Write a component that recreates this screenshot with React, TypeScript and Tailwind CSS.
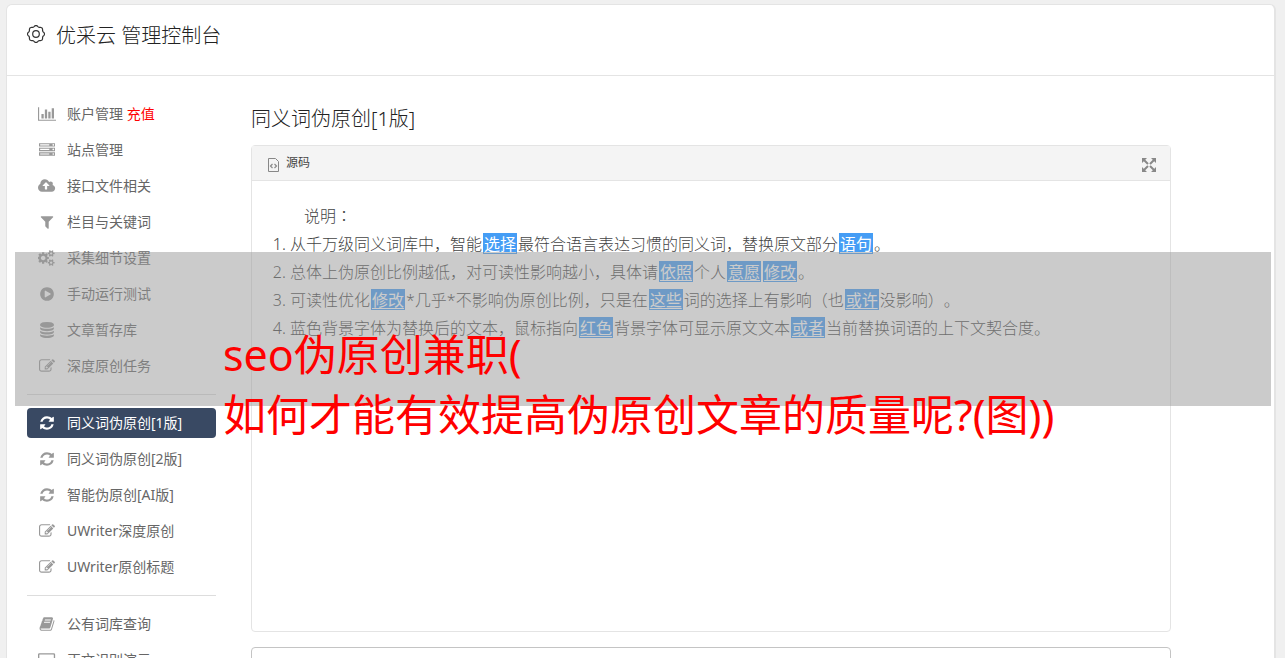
import React from "react";

type IconDef = { w: number; d: string };

const gearSmall = (y: number) =>
  `M1856 ${y}v140q0 16-149 31-12 27-30 52 51 113 51 138 0 4-4 7-122 71-124 71-8 0-46-47t-52-68q-20 2-30 2t-30-2q-14 21-52 68t-46 47q-2 0-124-71-4-3-4-7 0-25 51-138-18-25-30-52-149-15-149-31v-140q0-16 149-31 13-29 30-52-51-113-51-138 0-4 4-7 4-2 35-20t59-34 30-16q8 0 46 46.500t52 67.500q20-2 30-2t30 2q51-71 92-112l6-2q4 0 124 70 4 3 4 7 0 25-51 138 17 23 30 52 149 15 149 31z`;

const icons = {
  chart: { w: 2048, d: "M640 896v512h-256v-512h256zm384-512v1024h-256v-1024h256zm1024 1152v128h-2048v-1536h128v1408h1920zm-640-896v768h-256v-768h256zm384-384v1152h-256v-1152h256z" },
  server: { w: 1792, d: "M128 1408h1024v-128h-1024v128zm0-512h1024v-128h-1024v128zm1568 448q0-40-28-68t-68-28-68 28-28 68 28 68 68 28 68-28 28-68zm-1568-960h1024v-128h-1024v128zm1568 448q0-40-28-68t-68-28-68 28-28 68 28 68 68 28 68-28 28-68zm0-512q0-40-28-68t-68-28-68 28-28 68 28 68 68 28 68-28 28-68zm96 832v384h-1792v-384h1792zm0-512v384h-1792v-384h1792zm0-512v384h-1792v-384h1792z" },
  cloud: { w: 1920, d: "M1280 864q0-14-9-23l-352-352q-9-9-23-9t-23 9l-351 351q-10 12-10 24 0 14 9 23t23 9h224v352q0 13 9.500 22.500t22.500 9.500h192q13 0 22.500-9.500t9.500-22.500v-352h224q13 0 22.500-9.500t9.500-22.500zm640 288q0 159-112.500 271.500t-271.500 112.500h-1088q-185 0-316.500-131.500t-131.500-316.500q0-130 70-240t188-165q-2-30-2-43 0-212 150-362t362-150q156 0 285.500 87t188.500 231q71-62 166-62 106 0 181 75t75 181q0 76-41 138 130 31 213.500 135.500t83.500 238.500z" },
  filter: { w: 1792, d: "M1595 295q17 41-14 70l-493 493v742q0 42-39 59-13 5-25 5-27 0-45-19l-256-256q-19-19-19-45v-486l-493-493q-31-29-14-70 17-39 59-39h1280q42 0 59 39z" },
  cogs: {
    w: 1920,
    d:
      "M832 896q0-106-75-181t-181-75-181 75-75 181 75 181 181 75 181-75 75-181zm768 512q0-52-38-90t-90-38-90 38-38 90q0 53 37.500 90.500t90.500 37.500 90.500-37.500 37.500-90.500zm0-1024q0-52-38-90t-90-38-90 38-38 90q0 53 37.500 90.500t90.500 37.500 90.500-37.500 37.500-90.500zm-384 421v185q0 10-7 19.500t-16 10.500l-155 24q-11 35-32 76 34 48 90 115 7 11 7 20 0 12-7 19-23 30-82.500 89.500t-78.500 59.500q-11 0-21-7l-115-90q-37 19-77 31-11 108-23 155-7 24-30 24h-186q-11 0-20-7.500t-10-17.500l-23-153q-34-10-75-31l-118 89q-7 7-20 7-11 0-21-8-144-133-144-160 0-9 7-19 10-14 41-53t47-61q-23-44-35-82l-152-24q-10-1-17-9.500t-7-19.500v-185q0-10 7-19.500t16-10.500l155-24q11-35 32-76-34-48-90-115-7-11-7-20 0-12 7-20 22-30 82-89t79-59q11 0 21 7l115 90q34-18 77-32 11-108 23-154 7-24 30-24h186q11 0 20 7.500t10 17.500l23 153q34 10 75 31l118-89q8-7 20-7 11 0 21 8 144 133 144 160 0 8-7 19-12 16-42 54t-45 60q23 48 34 82l152 23q10 2 17 10.500t7 19.500z" +
      gearSmall(1338) +
      gearSmall(314),
  },
  play: { w: 1792, d: "M896 128q209 0 385.500 103t279.500 279.500 103 385.500-103 385.500-279.500 279.500-385.500 103-385.500-103-279.500-279.500-103-385.500 103-385.500 279.500-279.500 385.500-103zm384 823q32-18 32-55t-32-55l-544-320q-31-19-64-1-32 19-32 56v640q0 37 32 56 16 8 32 8 17 0 32-9z" },
  database: { w: 1792, d: "M896 768q237 0 443-43t325-127v170q0 69-103 128t-280 93.500-385 34.500-385-34.500-280-93.500-103-128v-170q119 84 325 127t443 43zm0 768q237 0 443-43t325-127v170q0 69-103 128t-280 93.500-385 34.500-385-34.500-280-93.500-103-128v-170q119 84 325 127t443 43zm0-384q237 0 443-43t325-127v170q0 69-103 128t-280 93.500-385 34.500-385-34.500-280-93.500-103-128v-170q119 84 325 127t443 43zm0-1152q208 0 385 34.500t280 93.500 103 128v128q0 69-103 128t-280 93.500-385 34.500-385-34.500-280-93.500-103-128v-128q0-69 103-128t280-93.500 385-34.500z" },
  refresh: { w: 1792, d: "M1639 1056q0 5-1 7-64 268-268 434.500t-478 166.500q-146 0-282.500-55t-243.500-157l-129 129q-19 19-45 19t-45-19-19-45v-448q0-26 19-45t45-19h448q26 0 45 19t19 45-19 45l-137 137q71 66 161 102t187 36q134 0 250-65t186-179q11-17 53-117 8-23 30-23h192q13 0 22.500 9.500t9.500 22.500zm25-800v448q0 26-19 45t-45 19h-448q-26 0-45-19t-19-45 19-45l138-138q-148-137-349-137-134 0-250 65t-186 179q-11 17-53 117-8 23-30 23h-199q-13 0-22.500-9.500t-9.500-22.500v-7q65-268 270-434.500t480-166.500q146 0 284 55.500t245 156.500l130-129q19-19 45-19t45 19 19 45z" },
  edit: { w: 1792, d: "M888 1184l116-116-152-152-116 116v56h96v96h56zm440-720q-16-16-33 1l-350 350q-17 17-1 33t33-1l350-350q17-17 1-33zm80 594v190q0 119-84.500 203.500t-203.500 84.500h-832q-119 0-203.500-84.500t-84.500-203.500v-832q0-119 84.500-203.500t203.500-84.500h832q63 0 117 25 15 7 18 23 3 17-9 29l-49 49q-14 14-32 8-23-6-45-6h-832q-66 0-113 47t-47 113v832q0 66 47 113t113 47h832q66 0 113-47t47-113v-126q0-13 9-22l64-64q15-15 35-7t20 29zm-96-738l288 288-672 672h-288v-288zm444 132l-92 92-288-288 92-92q28-28 68-28t68 28l152 152q28 28 28 68t-28 68z" },
  book: { w: 1792, d: "M1703 478q40 57 18 129l-275 906q-19 64-76.500 107.500t-122.500 43.500h-923q-77 0-148.500-53.500t-99.500-131.500q-24-67-2-127 0-4 3-27t4-37q1-8-3-21.500t-3-19.500q2-11 8-21t16.500-23.500 16.500-23.500q23-38 45-91.500t30-91.500q3-10 .5-30t-.5-28q3-11 17-28t17-23q21-36 42-92t25-90q1-9-2.500-32t.5-28q4-13 22-30.500t22-22.500q19-26 42.500-84.500t27.500-96.500q1-8-3-25.500t-2-26.500q2-8 9-18t18-23 17-21q8-12 16.500-30.500t15-35 16-36 19.500-32 26.500-23.500 36-11.500 47.500 5.500l-1 3q38-9 51-9h761q74 0 114 56t18 130l-274 906q-36 119-71.500 153.500t-128.500 34.500h-869q-27 0-38 15-11 16-1 43 24 70 144 70h923q29 0 56-15.500t35-41.500l300-987q7-22 5-57 38 15 59 43zm-1064 2q-4 13 2 22.500t20 9.500h608q13 0 25.500-9.500t16.500-22.500l21-64q4-13-2-22.500t-20-9.500h-608q-13 0-25.500 9.500t-16.500 22.500zm-83 256q-4 13 2 22.500t20 9.500h608q13 0 25.500-9.500t16.500-22.500l21-64q4-13-2-22.500t-20-9.500h-608q-13 0-25.500 9.500t-16.500 22.500z" },
  screen: { w: 1920, d: "M160 128h1600q160 0 160 160v1100q0 160-160 160h-1600q-160 0-160-160v-1100q0-160 160-160zm30 150q-40 0-40 40v900q0 40 40 40h1540q40 0 40-40v-900q0-40-40-40z" },
} satisfies Record<string, IconDef>;

type IconName = keyof typeof icons;

function Icon({ name }: { name: IconName }) {
  const { w, d } = icons[name];
  return (
    <svg viewBox={`0 0 ${w} 1792`} className="h-4 w-auto" fill="currentColor" fillRule="evenodd" aria-hidden="true">
      <path d={d} />
    </svg>
  );
}

type Item = { icon: IconName; label: string; extra?: string; active?: boolean };

const groups: Item[][] = [
  [
    { icon: "chart", label: "账户管理", extra: "充值" },
    { icon: "server", label: "站点管理" },
    { icon: "cloud", label: "接口文件相关" },
    { icon: "filter", label: "栏目与关键词" },
    { icon: "cogs", label: "采集细节设置" },
    { icon: "play", label: "手动运行测试" },
    { icon: "database", label: "文章暂存库" },
    { icon: "edit", label: "深度原创任务" },
  ],
  [
    { icon: "refresh", label: "同义词伪原创[1版]", active: true },
    { icon: "refresh", label: "同义词伪原创[2版]" },
    { icon: "refresh", label: "智能伪原创[AI版]" },
    { icon: "edit", label: "UWriter深度原创" },
    { icon: "edit", label: "UWriter原创标题" },
  ],
  [
    { icon: "book", label: "公有词库查询" },
    { icon: "screen", label: "正文识别演示" },
  ],
];

function NavLink({ icon, label, extra, active }: Item) {
  return (
    <a
      href="#"
      aria-current={active ? "page" : undefined}
      className={
        active
          ? "flex h-[30px] items-center rounded bg-[#394963] pl-2.5 text-white"
          : "flex h-[30px] items-center rounded pl-2.5 text-[#666]"
      }
    >
      <span className={active ? "mr-2.5 flex w-5 justify-center" : "mr-2.5 flex w-5 justify-center text-[#999]"}>
        <Icon name={icon} />
      </span>
      <span>
        {label}
        {extra && <span className="text-[#f00]"> {extra}</span>}
      </span>
    </a>
  );
}

function Mark({ children }: { children: React.ReactNode }) {
  return (
    <a href="#" className="mx-px mt-[3px] inline-block h-[21px] bg-[#459df5] px-px align-top leading-[22px] font-normal text-white underline underline-offset-2">
      {children}
    </a>
  );
}

const scallop =
  Array.from({ length: 97 }, (_, i) => {
    const a = (i / 96) * Math.PI * 2;
    const r = 7.9 + 0.6 * Math.cos(8 * a);
    return `${i ? "L" : "M"}${(9 + r * Math.sin(a)).toFixed(2)} ${(9 - r * Math.cos(a)).toFixed(2)}`;
  }).join("") + "Z";

export default function App() {
  return (
    <div
      lang="zh-CN"
      className="relative flex h-screen flex-col overflow-hidden bg-[#f0f0f0] pt-1 pr-[9px] pl-1.5 font-['Noto_Sans','Noto_Sans_CJK_SC',sans-serif] font-light text-[#222] [text-spacing-trim:space-all]"
    >
      <div className="shrink-0 grow rounded-t-md border-t border-r-2 border-l border-[#e4e4e4] bg-white">
        <header className="flex h-[71px] items-start gap-[11px] border-b border-[#e4e4e4] pt-4 pl-5">
          <svg viewBox="0 0 18 18" className="mt-1 size-[18px]" fill="none" stroke="#333" strokeWidth="1.2" aria-hidden="true">
            <path d={scallop} />
            <circle cx="9" cy="9" r="3.3" />
          </svg>
          <h1 className="text-xl leading-[30px]">优采云 管理控制台</h1>
        </header>

        <div className="flex gap-[35px] pt-[23px] pl-5">
          <nav className="w-[189px] shrink-0 text-sm font-normal">
            {groups.map((group, i) => (
              <React.Fragment key={i}>
                {i > 0 && <hr className="my-[13px] border-[#ddd]" />}
                <ul className="flex flex-col gap-1.5">
                  {group.map((item) => (
                    <li key={item.label}>
                      <NavLink {...item} />
                    </li>
                  ))}
                </ul>
              </React.Fragment>
            ))}
          </nav>

          <main className="max-w-[920px] grow">
            <h2 className="pt-[5px] text-xl leading-[30px]">同义词伪原创[1版]</h2>
            <section className="mt-[11px] min-h-[487px] rounded border border-[#e4e4e4]">
              <div className="flex h-[35px] items-center justify-between border-b border-[#e4e4e4] bg-[#f4f4f4] pr-3.5 pl-4">
                <button type="button" className="flex items-center gap-[7px] text-xs font-normal text-[#444]">
                  <svg viewBox="0 0 11 14" className="mt-1 h-3.5 w-[11px]" fill="none" stroke="#888" aria-hidden="true">
                    <path d="M.5.5h7l3 3v10h-10z" />
                    <path d="M4.500 6L2.500 8l2 2M6.500 6l2 2-2 2" strokeWidth="1.200" />
                  </svg>
                  源码
                </button>
                <button type="button" aria-label="全屏">
                  <svg viewBox="0 0 14 14" className="mt-1 size-3.5" fill="#888" stroke="#888" strokeWidth="2" aria-hidden="true">
                    <path d="M2 2l4 4M12 2L8 6M2 12l4-4M12 12L8 8" />
                    <path stroke="none" d="M0 0h5L0 5zM14 0H9l5 5zM0 14h5L0 9zM14 14H9l5-5z" />
                  </svg>
                </button>
              </div>
              <div className="px-5 pt-5 text-base leading-7 text-[#444]">
                <p className="pl-8">
                  说明<span className="font-['Noto_Sans_CJK_TC',sans-serif]" lang="zh-TW">：</span>
                </p>
                <ol className="list-decimal pl-[18px]">
                  <li>
                    从千万级同义词库中，智能<Mark>选择</Mark>最符合语言表达习惯的同义词，替换原文部分<Mark>语句</Mark>。
                  </li>
                  <li>
                    总体上伪原创比例越低，对可读性影响越小，具体请<Mark>依照</Mark>个人<Mark>意愿</Mark>
                    <Mark>修改</Mark>。
                  </li>
                  <li>
                    可读性优化<Mark>修改</Mark>*几乎*不影响伪原创比例，只是在<Mark>这些</Mark>词的选择上有影响（也<Mark>或许</Mark>没影响）。
                  </li>
                  <li>
                    蓝色背景字体为替换后的文本，鼠标指向<Mark>红色</Mark>背景字体可显示原文文本<Mark>或者</Mark>当前替换词语的上下文契合度。
                  </li>
                </ol>
              </div>
            </section>
            <section className="mt-[15px] h-20 rounded border border-[#c4c4c4]" />
          </main>
        </div>
      </div>

      <div className="absolute top-[252px] right-3.5 left-[15px] h-[154px] bg-[#979797]/50" />
      <p className="absolute top-[325px] left-[223px] text-[43px] leading-[60px] font-normal whitespace-nowrap text-[#f00]">
        seo伪原创兼职(
        <br />
        如何才能有效提高伪原创文章的质量呢?(图))
      </p>
    </div>
  );
}
